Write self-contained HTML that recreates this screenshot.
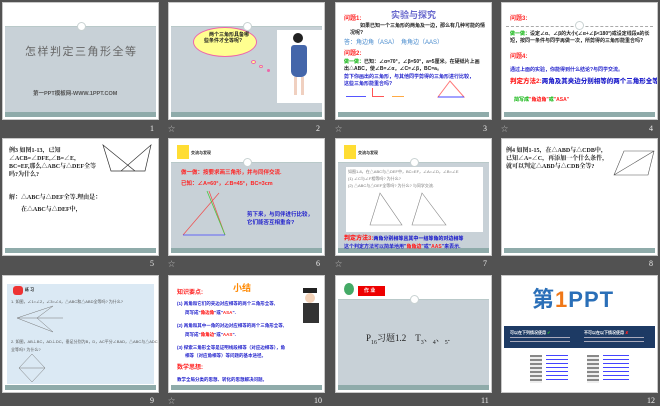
<!DOCTYPE html>
<html><head><meta charset="utf-8"><style>
*{margin:0;padding:0;box-sizing:border-box}
body{width:660px;height:405px;background:#525252;position:relative;overflow:hidden;font-family:"Liberation Sans","Noto Sans CJK SC",sans-serif}
.s{position:absolute;width:157px;height:118px;background:#fff;border:1px solid #c8c8c8;overflow:hidden}
.s div,.s span{position:absolute}
.n{position:absolute;color:#eee;font-size:8px;font-family:"Liberation Serif",serif}
.ic{position:absolute;color:#bbb;font-size:7px}
.top{left:2px;right:2px;top:2px;height:22px;background:#fff;border-bottom:1px solid #b9c9c9}
.body{left:2px;right:2px;top:24px;bottom:6px;background:#c8d1d7}
.bot{left:2px;right:2px;bottom:2px;height:5px;background:#8fabaa}
.circ{width:9px;height:9px;border-radius:50%;border:1.5px solid #c9d2d2;background:#fff;left:74px;top:19px}
.t{font-size:6px;line-height:8px;white-space:nowrap;font-weight:bold}
.r{color:#f22}.b{color:#22c}.g{color:#2b2}.k{color:#222}
</style></head><body>

<!-- 1 -->
<div class="s" style="left:2px;top:2px">
<div class="top"></div><div class="body"></div><div class="bot"></div><div class="circ"></div>
<span style="left:22px;top:40px;font-size:11px;color:#666;letter-spacing:1.5px;font-family:'Noto Sans CJK SC',sans-serif">怎样判定三角形全等</span>
<span class="t" style="left:30px;top:87px;color:#555;font-size:5.5px">第一PPT模板网-WWW.1PPT.COM</span>
</div>
<span class="n" style="left:150px;top:124px">1</span>

<!-- 2 -->
<div class="s" style="left:168px;top:2px">
<div class="top"></div><div class="body"></div><div class="bot"></div><div class="circ"></div>
<div style="left:24px;top:24px;width:64px;height:30px;border-radius:50%;background:#ffff90;border:1px solid #e6a"></div>
<span class="t k" style="left:35px;top:29px;font-size:5px;line-height:6px;white-space:normal;width:46px">　两个三角形具备哪些条件才全等呢?</span>
<div style="left:82px;top:57px;width:5px;height:4px;border-radius:50%;background:#ffff90;border:1px solid #e6a"></div>
<div style="left:90px;top:62px;width:4px;height:3px;border-radius:50%;background:#ffff90;border:1px solid #e6a"></div>
<div style="left:98px;top:66px;width:3px;height:3px;border-radius:50%;background:#e6a"></div>
<div style="left:108px;top:27px;width:46px;height:73px;background:#fff"></div>
<div style="left:124px;top:30px;width:10px;height:10px;border-radius:50%;background:#222"></div>
<div style="left:122px;top:42px;width:16px;height:32px;background:#46a;border-radius:3px 3px 6px 6px"></div>
<div style="left:125px;top:74px;width:3px;height:18px;background:#f0d0c0"></div>
<div style="left:132px;top:74px;width:3px;height:18px;background:#f0d0c0"></div>
</div>
<span class="ic" style="left:168px;top:124px">☆</span>
<span class="n" style="left:316px;top:124px">2</span>

<!-- 3 -->
<div class="s" style="left:335px;top:2px">
<div class="bot"></div>
<span style="left:55px;top:5px;font-size:9px;color:#66c;font-weight:bold">实验与探究</span>
<span class="t r" style="left:8px;top:12px">问题1:</span>
<span class="t k" style="left:14px;top:20px;font-size:5px;line-height:7px;white-space:normal;width:135px">　　如果已知一个三角形的两角及一边，那么有几种可能的情况呢?</span>
<span class="t" style="left:8px;top:36px;color:#48c;font-weight:normal">答：角边角（ASA）　角角边（AAS）</span>
<span class="t r" style="left:8px;top:47px">问题2:</span>
<span class="t k" style="left:8px;top:56px;font-size:5px;line-height:7px;white-space:normal;width:140px"><b class="g">做一做：</b>已知：∠α=70°，∠β=50°，a=5厘米。在硬纸片上画出△ABC，使∠B=∠α，∠C=∠β，BC=a。</span>
<span class="t b" style="left:8px;top:71px;font-size:5px;line-height:7px;white-space:normal;width:130px">剪下你画出的三角形，与其他同学剪得的三角形进行比较，这些三角形能重合吗?</span>
<div style="left:10px;top:93px;width:20px;height:1px;background:#55f"></div>
<div style="left:36px;top:85px;width:12px;height:9px;border-bottom:1px solid #f55;border-left:1px solid #f55"></div>
<div style="left:56px;top:85px;width:12px;height:9px;border-bottom:1px solid #fa4"></div>
<svg style="position:absolute;left:100px;top:76px" width="30" height="20"><path d="M2 18 L14 2 L28 18 Z" fill="none" stroke="#f77"/><path d="M2 18 L28 18" stroke="#44f"/></svg>
</div>
<span class="ic" style="left:335px;top:124px">☆</span>
<span class="n" style="left:483px;top:124px">3</span>

<!-- 4 -->
<div class="s" style="left:501px;top:2px">
<div class="bot"></div>
<div style="left:4px;right:4px;top:23px;height:0;border-top:1px dashed #aaa"></div>
<div class="circ" style="left:73px;top:18px"></div>
<span class="t r" style="left:8px;top:12px">问题3:</span>
<span class="t k" style="left:8px;top:28px;font-size:5px;line-height:7px;white-space:normal;width:142px"><b class="g">做一做：</b>设定∠α、∠β的大小(∠α+∠β&lt;180°)或设定线段a的长短，按同一条件与同学再做一次，所剪得的三角形能重合吗?</span>
<span class="t r" style="left:8px;top:50px">问题4:</span>
<span class="t b" style="left:8px;top:63px;font-size:5px">通过上面的实验，你能得到什么结论?与同学交流。</span>
<span class="t" style="left:8px;top:75px;font-size:6.5px"><b class="r">判定方法2:</b><b class="b">两角及其夹边分别相等的两个三角形全等.</b></span>
<span class="t" style="left:12px;top:93px;font-size:5px"><b class="g">简写成</b><b class="r">"角边角"</b><b class="g">或</b><b class="r">"ASA"</b></span>
</div>
<span class="ic" style="left:501px;top:124px">☆</span>
<span class="n" style="left:649px;top:124px">4</span>

<!-- 5 -->
<div class="s" style="left:2px;top:138px">
<div class="bot"></div>
<span class="t k" style="left:6px;top:8px;font-size:6px;line-height:8px;font-family:'Liberation Serif','Noto Serif CJK SC',serif;white-space:normal;width:90px">例3 如图1-13，已知 ∠ACB=∠DFE,∠B=∠E，BC=EF,那么△ABC与△DEF全等吗?为什么?</span>
<svg style="position:absolute;left:96px;top:4px" width="55" height="38"><path d="M4 2 L12 28 L36 28 Z M52 2 L22 28 L46 28 Z" fill="none" stroke="#333" stroke-width=".7"/></svg>
<span class="t k" style="left:6px;top:55px;font-size:6px;font-family:'Liberation Serif','Noto Serif CJK SC',serif">解：△ABC与△DEF全等.理由是：</span>
<span class="t k" style="left:18px;top:67px;font-size:6px;font-family:'Liberation Serif','Noto Serif CJK SC',serif">在△ABC与△DEF中，</span>
</div>
<span class="n" style="left:150px;top:259px">5</span>

<!-- 6 -->
<div class="s" style="left:168px;top:138px">
<div class="top"></div><div class="body"></div><div class="bot"></div><div class="circ"></div>
<div style="left:8px;top:6px;width:12px;height:14px;background:#fd3"></div>
<span class="t k" style="left:22px;top:10px;font-size:4px">交流与发现</span>
<span class="t r" style="left:12px;top:30px;font-size:5.5px">做一做：按要求画三角形，并与同伴交流.</span>
<span class="t r" style="left:12px;top:41px;font-size:5.5px">已知：∠A=60°，∠B=45°，BC=3cm</span>
<svg style="position:absolute;left:10px;top:50px" width="60" height="50"><path d="M4 46 L40 4 M30 2 L46 46" stroke="#e55" stroke-width=".8"/><path d="M28 2 L46 46" stroke="#4c4" stroke-width=".8"/><path d="M4 46 L46 46" stroke="#44f" stroke-width=".8"/></svg>
<span class="t b" style="left:78px;top:72px;font-size:5.5px;line-height:8px;white-space:normal;width:70px">剪下来，与同伴进行比较，它们能否互相重合?</span>
</div>
<span class="ic" style="left:168px;top:259px">☆</span>
<span class="n" style="left:316px;top:259px">6</span>

<!-- 7 -->
<div class="s" style="left:335px;top:138px">
<div class="top"></div><div class="body"></div><div class="bot"></div><div class="circ"></div>
<div style="left:8px;top:6px;width:12px;height:14px;background:#fd3"></div>
<span class="t k" style="left:22px;top:10px;font-size:4px">交流与发现</span>
<div style="left:10px;top:28px;width:137px;height:65px;background:#fff"></div>
<span class="t" style="left:12px;top:29px;font-size:4px;color:#777;font-weight:normal;line-height:7px">如图1-8，在△ABC与△DEF中，BC=EF，∠A=∠D，∠B=∠E<br>(1) ∠C与∠F相等吗? 为什么?<br>(2) △ABC与△DEF全等吗? 为什么? 与同学交流.</span>
<svg style="position:absolute;left:30px;top:50px" width="90" height="40"><path d="M4 36 L14 4 L36 36 Z M46 36 L56 4 L80 36 Z" fill="none" stroke="#888" stroke-width=".6"/></svg>
<span class="t" style="left:8px;top:96px;font-size:5px"><b class="r" style="font-size:6px">判定方法3:</b><b class="b">两角分别相等且其中一组等角的对边相等</b></span>
<span class="t b" style="left:8px;top:104px;font-size:5px">这个判定方法可以简单地用"<b class="r">角角边</b>"或"<b class="r">AAS</b>"来表示.</span>
</div>
<span class="ic" style="left:335px;top:259px">☆</span>
<span class="n" style="left:483px;top:259px">7</span>

<!-- 8 -->
<div class="s" style="left:501px;top:138px">
<div class="bot"></div>
<span class="t k" style="left:4px;top:8px;font-size:6px;line-height:8px;font-family:'Liberation Serif','Noto Serif CJK SC',serif;white-space:normal;width:105px">例4 如图1-15，在△ABD与△CDB中，已知∠A=∠C，再添加一个什么条件，就可以判定△ABD与△CDB全等?</span>
<svg style="position:absolute;left:108px;top:8px" width="46" height="32"><path d="M4 28 L14 4 L44 4 L38 28 Z M4 28 L44 4" fill="none" stroke="#555" stroke-width=".6"/></svg>
</div>
<span class="n" style="left:649px;top:259px">8</span>

<!-- 9 -->
<div class="s" style="left:2px;top:275px">
<div style="left:4px;right:4px;top:8px;bottom:8px;background:#dbe9f4"></div>
<div class="bot"></div>
<div style="left:10px;top:10px;width:10px;height:9px;background:#e33;border-radius:3px"></div>
<span class="t k" style="left:22px;top:10px;font-size:4px">练 习</span>
<span class="t" style="left:8px;top:22px;font-size:4px;color:#555;font-weight:normal">1. 如图，∠1=∠2，∠3=∠4，△ABC和△ABD全等吗? 为什么?</span>
<svg style="position:absolute;left:12px;top:28px" width="50" height="30"><path d="M2 14 L38 2 L22 14 L38 28 Z M2 14 L48 14" fill="none" stroke="#777" stroke-width=".5"/></svg>
<span class="t" style="left:8px;top:62px;font-size:4px;color:#555;font-weight:normal">2. 如图，AB⊥BC，AD⊥DC，垂足分别为B，D，AC平分∠BAD，△ABC与△ADC</span>
<span class="t" style="left:8px;top:70px;font-size:4px;color:#555;font-weight:normal">全等吗? 为什么?</span>
<svg style="position:absolute;left:14px;top:76px" width="30" height="32"><path d="M2 16 L15 2 L28 16 L15 30 Z M2 16 L28 16" fill="none" stroke="#777" stroke-width=".5"/></svg>
</div>
<span class="n" style="left:150px;top:396px">9</span>

<!-- 10 -->
<div class="s" style="left:168px;top:275px">
<div class="bot"></div>
<span style="left:64px;top:5px;font-size:9px;color:#f80;font-weight:bold">小结</span>
<span class="t r" style="left:8px;top:13px">知识要点:</span>
<span class="t b" style="left:8px;top:24px;font-size:4.5px">(1) 两角和它们的夹边对应相等的两个三角形全等,</span>
<span class="t b" style="left:16px;top:33px;font-size:4.5px">简写成"<b class="r">角边角</b>"或"<b class="r">ASA</b>".</span>
<span class="t b" style="left:8px;top:46px;font-size:4.5px">(2) 两角和其中一角的对边对应相等的两个三角形全等,</span>
<span class="t b" style="left:16px;top:55px;font-size:4.5px">简写成"<b class="r">角角边</b>"或"<b class="r">AAS</b>".</span>
<span class="t b" style="left:8px;top:68px;font-size:4.5px">(3) 探索三角形全等是证明线段相等（对应边相等），角</span>
<span class="t b" style="left:16px;top:76px;font-size:4.5px">相等（对应角相等）等问题的基本途径。</span>
<span class="t r" style="left:8px;top:88px">数学思想:</span>
<span class="t b" style="left:8px;top:100px;font-size:4.5px">教学全局分类的思想、转化的思想解决问题。</span>
<div style="left:134px;top:12px;width:14px;height:5px;background:#222"></div>
<div style="left:136px;top:17px;width:10px;height:10px;border-radius:50%;background:#f3d2b8"></div>
<div style="left:134px;top:27px;width:16px;height:20px;background:#333"></div>
</div>
<span class="ic" style="left:168px;top:396px">☆</span>
<span class="n" style="left:314px;top:396px">10</span>

<!-- 11 -->
<div class="s" style="left:335px;top:275px">
<div class="top"></div><div class="body"></div><div class="bot"></div><div class="circ"></div>
<div style="left:8px;top:7px;width:10px;height:12px;border-radius:50%;background:#4a6"></div>
<div style="left:22px;top:10px;width:27px;height:10px;background:#e00"></div>
<span class="t" style="left:28px;top:11px;color:#fff;font-size:5px">作 业</span>
<span style="left:30px;top:55px;font-size:9px;color:#222;font-family:'Liberation Serif','Noto Serif CJK SC',serif;white-space:nowrap">P<sub style="font-size:6px">16</sub>习题1.2　T<sub style="font-size:6px">3</sub>、<sub style="font-size:6px">4</sub>、<sub style="font-size:6px">5</sub>.</span>
</div>
<span class="n" style="left:481px;top:396px">11</span>

<!-- 12 -->
<div class="s" style="left:501px;top:275px">
<span style="left:30px;top:12px;font-size:22px;font-weight:bold;color:#2a6fb8;letter-spacing:1px;line-height:24px">第<b style="color:#f07818">1</b>PPT</span>
<div style="left:2px;right:2px;top:50px;height:22px;background:#1d3a64"></div>
<span class="t" style="left:8px;top:53px;color:#fff;font-size:4px">可以在下列情况使用 <b class="g">✔</b></span>
<span class="t" style="left:82px;top:53px;color:#fff;font-size:4px">不可以在以下情况使用 <b class="r">✘</b></span>
<div style="left:8px;top:61px;width:60px;height:1px;background:#aab"></div>
<div style="left:8px;top:65px;width:60px;height:1px;background:#aab"></div>
<div style="left:82px;top:61px;width:60px;height:1px;background:#aab"></div>
<div style="left:82px;top:65px;width:60px;height:1px;background:#aab"></div>
<div style="left:28px;top:79px;width:12px;height:28px;background:repeating-linear-gradient(#888 0 2px,#eee 2px 4px)"></div>
<div style="left:44px;top:79px;width:22px;height:28px;background:repeating-linear-gradient(#44f 0 1px,#fff 1px 4px)"></div>
<div style="left:85px;top:79px;width:12px;height:28px;background:repeating-linear-gradient(#888 0 2px,#eee 2px 4px)"></div>
<div style="left:101px;top:79px;width:26px;height:28px;background:repeating-linear-gradient(#44f 0 1px,#fff 1px 4px)"></div>
</div>
<span class="n" style="left:647px;top:396px">12</span>

</body></html>
